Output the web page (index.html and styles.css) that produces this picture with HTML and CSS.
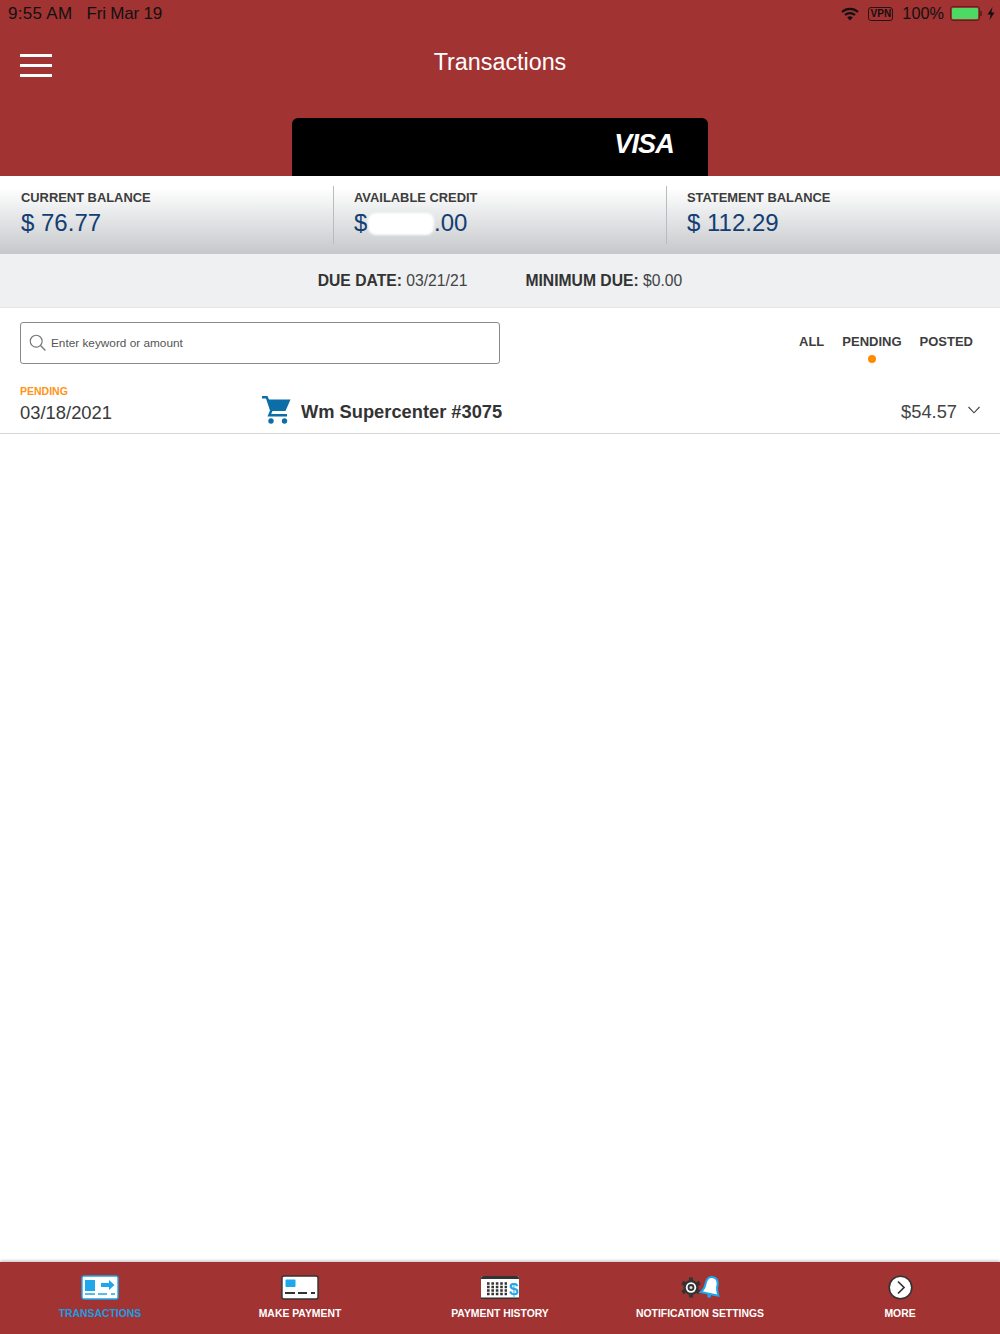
FILE: index.html
```html
<!DOCTYPE html>
<html>
<head>
<meta charset="utf-8">
<title>Transactions</title>
<link rel="stylesheet" href="styles.css">
</head>
<body>
<div class="page">
  <header class="top">
    <div class="status">
      <span class="status-time">9:55 AM</span>
      <span class="status-date">Fri Mar 19</span>
      <span class="status-right">
        <svg class="wifi" width="18" height="14" viewBox="0 0 18 14">
          <path d="M1 5 A12 12 0 0 1 17 5" fill="none" stroke="#111" stroke-width="2.2"/>
          <path d="M4 8 A7.5 7.5 0 0 1 14 8" fill="none" stroke="#111" stroke-width="2.2"/>
          <path d="M6.2 10.6 A4 4 0 0 1 11.8 10.6 L9 13.6 Z" fill="#111"/>
        </svg>
        <span class="vpn">VPN</span>
        <span class="pct">100%</span>
        <span class="battery"><span class="battery-fill"></span></span>
        <span class="battery-tip"></span>
        <svg class="bolt" width="8" height="13" viewBox="0 0 8 13"><path d="M5.5 0 L0.5 7.4 H3.6 L2.5 13 L7.5 5.4 H4.4 Z" fill="#111"/></svg>
      </span>
    </div>
    <div class="titlebar">
      <div class="burger"><i></i><i></i><i></i></div>
      <h1 class="title">Transactions</h1>
    </div>
    <div class="card"><span class="visa">VISA</span></div>
  </header>

  <section class="balances">
    <div class="balance">
      <div class="balance-label">CURRENT BALANCE</div>
      <div class="balance-value">$ 76.77</div>
    </div>
    <div class="balance">
      <div class="balance-label">AVAILABLE CREDIT</div>
      <div class="balance-value">$ <span class="blot"></span>.00</div>
    </div>
    <div class="balance">
      <div class="balance-label">STATEMENT BALANCE</div>
      <div class="balance-value">$ 112.29</div>
    </div>
  </section>

  <section class="due">
    <span><b>DUE DATE:</b> 03/21/21</span>
    <span><b>MINIMUM DUE:</b> $0.00</span>
  </section>

  <section class="tools">
    <div class="search">
      <svg width="18" height="18" viewBox="0 0 20 20"><circle cx="8" cy="8" r="6.6" fill="none" stroke="#777" stroke-width="1.3"/><path d="M12.8 12.8 L18.2 18.4" stroke="#777" stroke-width="1.5"/></svg>
      <span>Enter keyword or amount</span>
    </div>
    <nav class="filters">
      <span class="filter">ALL</span>
      <span class="filter filter-on">PENDING</span>
      <span class="filter">POSTED</span>
    </nav>
  </section>

  <section class="row">
    <div class="row-date">
      <div class="row-state">PENDING</div>
      <div class="row-day">03/18/2021</div>
    </div>
    <svg class="cart" width="29" height="29" viewBox="0 0 29 29">
      <path d="M0 1 H5.5 L7 4.5 H28.5 L23.5 16 H10.5 L9.2 19 H25 V21.5 H5.5 L8 15.5 L4 3.6 H0 Z" fill="#0b6ea6"/>
      <circle cx="9" cy="26" r="2.7" fill="#0b6ea6"/>
      <circle cx="22.5" cy="26" r="2.7" fill="#0b6ea6"/>
    </svg>
    <div class="row-name">Wm Supercenter #3075</div>
    <div class="row-amount">$54.57</div>
    <svg class="chev" width="12" height="8" viewBox="0 0 12 8"><path d="M0.5 1 L6 6.8 L11.5 1" fill="none" stroke="#444" stroke-width="1.1"/></svg>
  </section>

  <div class="spacer"></div>

  <footer class="tabs">
    <div class="tab tab-on">
      <svg width="38" height="25" viewBox="0 0 38 25">
        <rect x="1" y="1" width="36" height="23" rx="2" fill="#fff" stroke="#1ea7ea" stroke-width="1.4"/>
        <rect x="4" y="5" width="10" height="11" fill="#1ea7ea"/>
        <path d="M20 8 H28 V5 L33.5 10 L28 15 V12 H20 Z" fill="#1ea7ea"/>
        <path d="M4 19 H14 M17 19 H26 M30 19 H34" stroke="#1ea7ea" stroke-width="1.6"/>
      </svg>
      <span>TRANSACTIONS</span>
    </div>
    <div class="tab">
      <svg width="38" height="25" viewBox="0 0 38 25">
        <rect x="1" y="1" width="36" height="23" rx="2" fill="#fff" stroke="#333" stroke-width="1.4"/>
        <rect x="4.500" y="4.500" width="10" height="7.500" rx="1" fill="#1ea7ea"/>
        <path d="M4 18 H14 M17 18 H26 M30 18 H34" stroke="#333" stroke-width="1.8"/>
      </svg>
      <span>MAKE PAYMENT</span>
    </div>
    <div class="tab">
      <svg width="40" height="25" viewBox="0 0 40 25">
        <rect x="1" y="1" width="38" height="23" rx="2" fill="#fff"/>
        <path d="M1 3 a2 2 0 0 1 2 -2 H37 a2 2 0 0 1 2 2 V4 H1 Z" fill="#333"/>
        <path d="M1 22.500 H39 V24 H1 Z" fill="#333"/>
        <path d="M7 8.500 H27 M7 12 H27 M7 15.500 H27 M7 19 H27" stroke="#333" stroke-width="2.300" stroke-dasharray="2.600 1.800"/>
        <text class="dollar" x="29" y="20">$</text>
      </svg>
      <span>PAYMENT HISTORY</span>
    </div>
    <div class="tab">
      <svg width="40" height="25" viewBox="0 0 40 25">
        <g transform="translate(11 12.500)">
          <path d="M0 -10 V-6 M0 10 V6 M-8.700 -5 L-5.200 -3 M8.700 5 L5.200 3 M-8.700 5 L-5.200 3 M8.700 -5 L5.200 -3" stroke="#333" stroke-width="4"/>
          <circle r="7.500" fill="#333"/>
          <circle r="5.200" fill="#fff"/>
          <circle r="3.400" fill="#333"/>
          <circle r="1.500" fill="#ddd"/>
        </g>
        <g transform="rotate(12 31 12)">
          <path d="M31 2 C36 2 37 6 37 10 C37 14 39 17 40 19 H22 C24 17 25 14 25 10 C25 6 26 2 31 2 Z" fill="#fff" stroke="#1ea7ea" stroke-width="2"/>
          <circle cx="31" cy="21" r="2" fill="#1ea7ea"/>
        </g>
      </svg>
      <span>NOTIFICATION SETTINGS</span>
    </div>
    <div class="tab">
      <svg width="25" height="25" viewBox="0 0 25 25">
        <circle cx="12.500" cy="12.500" r="11.300" fill="#fff" stroke="#333" stroke-width="1.600"/>
        <path d="M10 6.500 L16 12.500 L10 18.500" fill="none" stroke="#333" stroke-width="1.700"/>
      </svg>
      <span>MORE</span>
    </div>
  </footer>
</div>
</body>
</html>
```

FILE: styles.css
```css
* { box-sizing: border-box; }
body {
  margin: 0;
  font-family: "Liberation Sans", Arial, sans-serif;
  color: #333;
  background: #fff;
}
.page {
  height: 1334px;
  display: flex;
  flex-direction: column;
  overflow: hidden;
}

/* red header */
.top { background: #a13333; height: 176px; display: flex; flex-direction: column; }
.status {
  height: 27px;
  padding: 0 5px 0 8px;
  display: flex;
  align-items: center;
  font-size: 17px;
  color: #111;
}
.status-time { letter-spacing: .3px; }
.status-date { margin-left: 14px; letter-spacing: -.2px; }
.status-right { margin-left: auto; display: flex; align-items: center; }
.wifi { margin-right: 9px; }
.vpn {
  border: 1.500px solid #2a1212;
  border-radius: 3px;
  font-size: 10px;
  font-weight: bold;
  letter-spacing: .1px;
  line-height: 10px;
  padding: 1px;
  margin-right: 9px;
}
.pct { margin-right: 6px; font-size: 16.300px; }
.battery {
  width: 30px;
  height: 15px;
  border: 1px solid #5e2222;
  border-radius: 3px;
  padding: 1px;
  display: block;
}
.battery-fill { display: block; height: 100%; background: #4cd964; border-radius: 1px; }
.battery-tip { width: 2px; height: 5px; background: #5e2222; margin-right: 5px; }
.titlebar {
  height: 64px;
  position: relative;
  display: flex;
  align-items: center;
  justify-content: center;
  padding-top: 7px;
}
.title { margin: 0; font-size: 23.300px; font-weight: normal; color: #fff; }
.burger {
  position: absolute;
  left: 20px;
  top: 27px;
  width: 32px;
  display: flex;
  flex-direction: column;
  gap: 7px;
}
.burger i { display: block; height: 3px; background: #fff; }
.card {
  width: 416px;
  height: 58px;
  margin: 0 auto;
  margin-top: auto;
  background: #000;
  border-radius: 6px 6px 0 0;
  display: flex;
  justify-content: flex-end;
  padding: 11px 34px 0 0;
}
.visa {
  color: #fff;
  font-size: 27px;
  line-height: 31px;
  font-weight: bold;
  font-style: italic;
  letter-spacing: -.8px;
}

/* balances */
.balances {
  height: 78px;
  padding-top: 10px;
  padding-bottom: 10px;
  display: flex;
  background: linear-gradient(#fff 15%, #c5c8cb);
}
.balance { width: 333px; padding-left: 21px; border-left: 1px solid #b9bcbf; }
.balance:first-child { border-left: 0; }
.balance + .balance { padding-left: 20px; }
.balance-label { font-size: 12.900px; font-weight: bold; color: #3d3d3d; line-height: 23px; }
.balance-value { font-size: 24px; line-height: 28px; color: #123e73; }
.blot {
  display: inline-block;
  width: 66px;
  height: 22px;
  margin-left: -6px;
  vertical-align: -4px;
  background: #fff;
  border-radius: 8px;
  filter: blur(1px);
}

/* due strip */
.due {
  height: 54px;
  background: #eef0f1;
  border-bottom: 1px solid #e3e4e5;
  display: flex;
  justify-content: center;
  align-items: center;
  gap: 58px;
  font-size: 15.700px;
  color: #444;
  padding-top: 1px;
}
.due b { color: #333; }

/* search and filters */
.tools {
  height: 70px;
  padding: 14px 27px 0 20px;
  display: flex;
  justify-content: space-between;
}
.search {
  width: 480px;
  height: 42px;
  border: 1.500px solid #8a8a8a;
  border-radius: 3px;
  display: flex;
  align-items: center;
  gap: 4px;
  padding-left: 8px;
  font-size: 11.800px;
  color: #555;
}
.filters { display: flex; gap: 18px; padding-top: 12px; }
.filter { font-size: 13px; font-weight: bold; color: #3d3d3d; line-height: 16px; position: relative; }
.filter-on::after {
  content: "";
  position: absolute;
  left: 50%;
  top: 21px;
  width: 8px;
  height: 8px;
  margin-left: -4px;
  border-radius: 50%;
  background: #ff8c00;
}

/* transaction row */
.row {
  height: 56px;
  border-bottom: 1.500px solid #d5d5d5;
  padding: 0 20px;
  display: flex;
  align-items: flex-end;
}
.row-date { width: 242px; padding-bottom: 8px; }
.row-state { font-size: 10.500px; font-weight: bold; color: #ff9416; line-height: 14px; }
.row-day { font-size: 18.400px; color: #3a3a3a; line-height: 24px; margin-top: 3px; }
.cart { margin-bottom: 9px; margin-right: 10px; }
.row-name { font-size: 18.300px; font-weight: bold; color: #333; line-height: 24px; padding-bottom: 9px; }
.row-amount { margin-left: auto; font-size: 18.300px; color: #444; line-height: 24px; padding-bottom: 9px; }
.chev { margin-left: 11px; margin-bottom: 19px; }

.spacer { flex: 1; }

/* bottom tabs */
.tabs {
  height: 72px;
  background: #a13333;
  display: flex;
  box-shadow: 0 -1px 3px rgba(0, 0, 0, .25);
}
.tab {
  width: 200px;
  padding-top: 13px;
  display: flex;
  flex-direction: column;
  align-items: center;
  font-size: 10.400px;
  font-weight: bold;
  color: #fff;
}
.tab span { margin-top: 7px; line-height: 13px; white-space: nowrap; }
.tab-on { color: #1c9de2; }
.dollar { font-size: 17px; font-weight: bold; fill: #1ea7ea; }
```
